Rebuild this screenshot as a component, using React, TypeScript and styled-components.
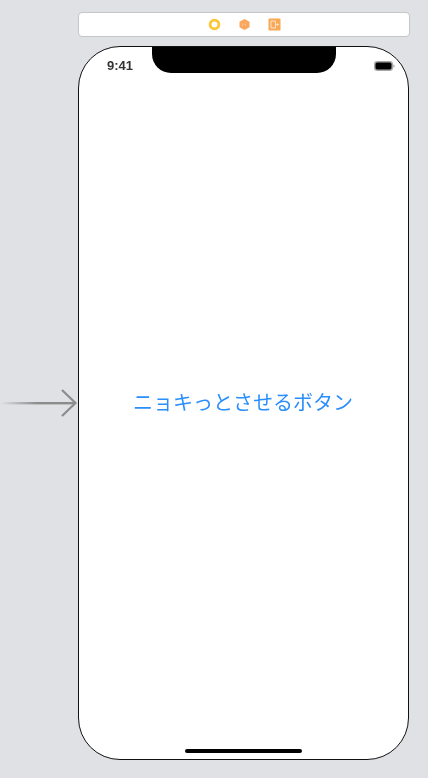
import React from "react";
import styled, { createGlobalStyle } from "styled-components";

const GlobalStyle = createGlobalStyle`
  html, body {
    margin: 0;
    padding: 0;
    background-color: #e0e1e5;
    overflow: hidden;
  }
`;

const Canvas = styled.main`
  display: grid;
  grid-template-columns: 78px 332px;
  grid-template-rows: 25px 714px;
  row-gap: 9px;
  padding-top: 12px;
  width: 428px;
  height: 778px;
  box-sizing: border-box;
  filter: blur(0.35px);
`;

const Toolbar = styled.div`
  grid-column: 2;
  grid-row: 1;
  display: flex;
  justify-content: center;
  align-items: center;
  gap: 17px;
  background-color: #fff;
  border: 1px solid #c6c6c9;
  border-radius: 4px;
  box-sizing: border-box;
`;

const EntryArrow = styled.svg`
  grid-column: 1;
  grid-row: 2;
  align-self: center;
  width: 78px;
  height: 30px;
`;

const Phone = styled.section`
  grid-column: 2;
  grid-row: 2;
  display: grid;
  grid-template-rows: 25px 1fr 26px;
  width: 331px;
  background-color: #fff;
  border: 1px solid #111;
  border-radius: 42px;
  box-sizing: border-box;
  overflow: hidden;
`;

const StatusBar = styled.header`
  display: grid;
  grid-template-columns: 73px 184px 1fr;
`;

const Time = styled.span`
  padding: 11px 0 0 28px;
  font-family: "Liberation Sans", Arial, sans-serif;
  font-size: 13px;
  line-height: 15px;
  font-weight: 700;
  color: #333;
  white-space: nowrap;
`;

const Notch = styled.div`
  background-color: #000;
  border-radius: 0 0 19px 19px;
`;

const BatterySlot = styled.div`
  display: flex;
  justify-content: flex-end;
  padding: 14px 13px 0 0;
`;

const Body = styled.div`
  display: flex;
  justify-content: center;
  align-items: center;
  padding: 0 1px 1px 0;
`;

const NyokiButton = styled.button`
  all: unset;
  font-family: "Noto Sans CJK JP", sans-serif;
  font-size: 20px;
  line-height: 26px;
  color: #2a8ffb;
  cursor: pointer;
`;

const Footer = styled.footer`
  display: flex;
  justify-content: center;
  align-items: flex-end;
  padding-bottom: 6px;
  box-sizing: border-box;
`;

const HomeBar = styled.div`
  width: 117px;
  height: 4px;
  border-radius: 2px;
  background-color: #000;
`;

const App: React.FC = () => {
  return (
    <>
      <GlobalStyle />
      <Canvas>
        <Toolbar>
          <svg width="13" height="13" viewBox="0 0 13 13">
            <circle cx="6.5" cy="6.5" r="4.4" fill="#fff" stroke="#fcc534" strokeWidth="2.8" />
          </svg>
          <svg width="13" height="13" viewBox="0 0 13 13">
            <path d="M6.5 1 11.5 3.7V9.3L6.5 12 1.5 9.3V3.7Z" fill="#f8a75c" />
            <path d="M4.5 5.5V8M8 5.5 6.8 6.8 8 8" fill="none" stroke="#fbc596" strokeWidth="0.8" />
          </svg>
          <svg width="13" height="13" viewBox="0 0 13 13">
            <rect x="0.5" y="0.5" width="12" height="12" rx="1" fill="#f9a855" />
            <path d="M3 3H7.5V10H3Z" fill="none" stroke="#fde3c8" strokeWidth="1" />
            <path d="M7.5 6.5H10.5M9.3 5.2 10.6 6.5 9.3 7.8" fill="none" stroke="#fde3c8" strokeWidth="0.9" />
          </svg>
        </Toolbar>
        <EntryArrow viewBox="0 0 78 30">
          <defs>
            <linearGradient id="arrowTail" x1="0" x2="1" y1="0" y2="0">
              <stop offset="0" stopColor="#8c8c8c" stopOpacity="0" />
              <stop offset="0.5" stopColor="#8c8c8c" />
              <stop offset="1" stopColor="#8c8c8c" />
            </linearGradient>
          </defs>
          <rect x="0" y="14" width="75" height="2.4" fill="url(#arrowTail)" />
          <path d="M62 2 75.5 15 62 28" fill="none" stroke="#8c8c8c" strokeWidth="2.2" />
        </EntryArrow>
        <Phone>
          <StatusBar>
            <Time>9:41</Time>
            <Notch />
            <BatterySlot>
              <svg width="21" height="10" viewBox="0 0 21 10">
                <rect x="0.75" y="0.75" width="17.5" height="8.5" rx="2.5" fill="#000" stroke="#a8a8a8" strokeWidth="1.5" />
                <rect x="19.2" y="3.5" width="1.4" height="3" rx="0.6" fill="#b5b5b5" />
              </svg>
            </BatterySlot>
          </StatusBar>
          <Body>
            <NyokiButton>ニョキっとさせるボタン</NyokiButton>
          </Body>
          <Footer>
            <HomeBar />
          </Footer>
        </Phone>
      </Canvas>
    </>
  );
};

export default App;
